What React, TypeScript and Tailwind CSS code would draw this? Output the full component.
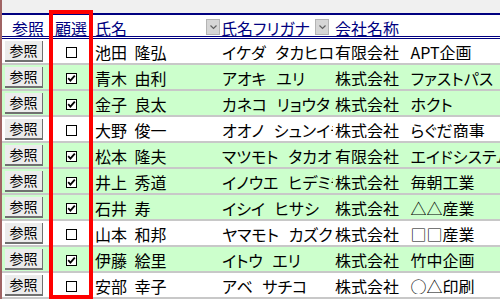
import React from 'react';

type Row = {
  name: string;
  kana: string;
  company: string;
  checked: boolean;
};

const rows: Row[] = [
  { name: '池田 隆弘', kana: 'イケダ タカヒロ', company: '有限会社 APT企画', checked: false },
  { name: '青木 由利', kana: 'アオキ ユリ', company: '株式会社 ファストパス', checked: true },
  { name: '金子 良太', kana: 'カネコ リョウタ', company: '株式会社 ホクト', checked: true },
  { name: '大野 俊一', kana: 'オオノ シュンイチ', company: '株式会社 らぐだ商事', checked: false },
  { name: '松本 隆夫', kana: 'マツモト タカオ', company: '有限会社 エイドシステム', checked: true },
  { name: '井上 秀道', kana: 'イノウエ ヒデミチ', company: '株式会社 毎朝工業', checked: true },
  { name: '石井 寿', kana: 'イシイ ヒサシ', company: '株式会社 △△産業', checked: true },
  { name: '山本 和邦', kana: 'ヤマモト カズクニ', company: '株式会社 □□産業', checked: false },
  { name: '伊藤 絵里', kana: 'イトウ エリ', company: '株式会社 竹中企画', checked: true },
  { name: '安部 幸子', kana: 'アベ サチコ', company: '株式会社 ○△印刷', checked: false },
];

function DropButton() {
  return (
    <span className="flex h-[16px] w-[14px] shrink-0 items-center justify-center border border-[#b4b4b4] bg-[#d6d6d6]">
      <svg width="9" height="6" viewBox="0 0 9 6">
        <path d="M1.5 1.5 L4.5 4.5 L7.5 1.5" fill="none" stroke="#606060" strokeWidth="1.2" />
      </svg>
    </span>
  );
}

function CheckBox({ checked }: { checked: boolean }) {
  return (
    <span className="flex h-[11px] w-[11px] items-center justify-center border border-black bg-white">
      {checked && (
        <svg width="9" height="9" viewBox="0 0 9 9">
          <path d="M1.2 4.2 L3.4 6.6 L7.8 1.6" fill="none" stroke="#000" strokeWidth="1.8" />
        </svg>
      )}
    </span>
  );
}

export default function App() {
  return (
    <div
      className="relative h-[299px] w-[500px] overflow-hidden border-l-2 border-[#a06464] bg-[#f0f0f0] pt-[13px]"
      style={{ fontFamily: '"Noto Sans CJK JP", "Noto Sans", sans-serif' }}
    >
      <div className="border-t-2 border-[#000080] bg-white">
        {/* header */}
        <div className="box-content flex h-[21px] items-center border-b-[3px] border-double border-[#000080] text-[16px] leading-none text-[#000080]">
          <div className="w-[48px] shrink-0 pl-[10px] pt-[4px]">参照</div>
          <div className="w-[43px] shrink-0 pl-[5px] pt-[4px]">顧選</div>
          <div className="flex w-[127px] shrink-0 items-center justify-between pl-[2px] pt-[2px]">
            <span className="pt-[2px]">氏名</span>
            <DropButton />
          </div>
          <div className="flex w-[113px] shrink-0 items-center pl-[1px] pt-[2px]">
            <span className="pt-[2px] [font-feature-settings:'palt']">氏名フリガナ</span>
            <span className="ml-auto mr-[4px]">
              <DropButton />
            </span>
          </div>
          <div className="pl-[2px] pt-[4px]">会社名称</div>
        </div>

        {/* rows */}
        {rows.map((r, i) => (
          <div
            key={i}
            className={`flex h-[26px] items-center overflow-hidden border-b-2 border-[#c8c8c8] text-[16px] leading-none text-black ${
              r.checked ? 'bg-[#ccffcc]' : 'bg-white'
            }`}
          >
            <div className="flex h-full w-[48px] shrink-0 items-center pl-[3px]">
              <button className="h-[21px] w-[38px] border-b-2 border-r border-[#707070] bg-[#ececec] text-[14px] leading-none text-black">
                参照
              </button>
            </div>
            <div className="flex w-[43px] shrink-0 justify-center pt-[2px]">
              <CheckBox checked={r.checked} />
            </div>
            <div className="w-[127px] shrink-0 whitespace-nowrap pl-[2px] pt-[2px] [word-spacing:4px]">{r.name}</div>
            <div className="w-[113px] shrink-0 overflow-hidden whitespace-nowrap pl-[2px] pt-[2px] [font-feature-settings:'palt'] [word-spacing:6px]">
              {r.kana}
            </div>
            <div className="min-w-0 flex-1 overflow-hidden whitespace-nowrap pl-[2px] pt-[2px] [font-feature-settings:'palt'] [word-spacing:8px]">
              {r.company}
            </div>
          </div>
        ))}
      </div>

      {/* red highlight around 顧選 column */}
      <div className="pointer-events-none absolute left-[47px] top-[10px] h-[289px] w-[44px] border-4 border-[#ff0000]" />
    </div>
  );
}
